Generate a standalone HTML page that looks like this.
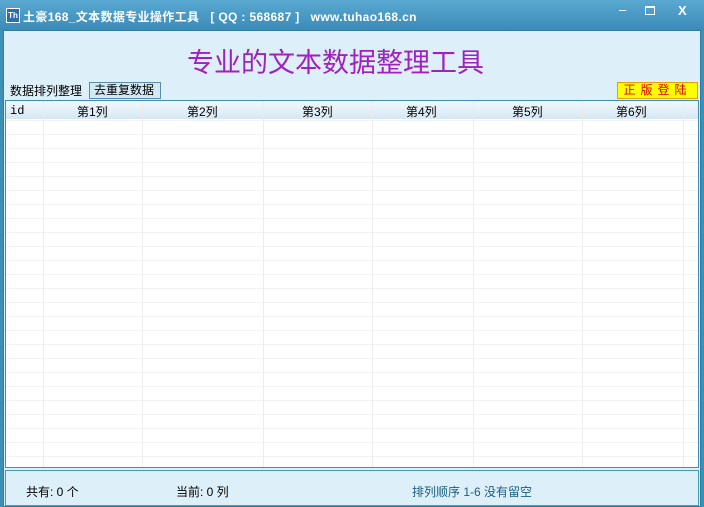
<!DOCTYPE html><html><head><meta charset="utf-8"><style>
body{margin:0;width:704px;height:507px;overflow:hidden;background:#3d8fb5;font-family:"Liberation Sans","Noto Sans CJK SC",sans-serif;position:relative}
div{position:absolute;box-sizing:border-box}
.t{font-size:12px;color:#000;white-space:nowrap}
</style></head><body>
<div style="left:0;top:0;width:704px;height:30px;background:linear-gradient(#5aa9d2,#3c8ab8)"></div>
<div style="left:6px;top:8px;width:14px;height:15px;background:#2a6fb0;border:1px solid #fff;color:#fff;font-size:8px;font-weight:bold;line-height:13px;text-align:center">Th</div>
<div class="t" style="left:23px;top:8px;color:#fff;font-weight:bold;font-size:12px;letter-spacing:0.35px">土豪168_文本数据专业操作工具 &nbsp;&nbsp;[ QQ : 568687 ] &nbsp;&nbsp;www.tuhao168.cn</div>
<div class="t" style="left:619px;top:2px;color:#fff;font-size:13px">–</div>
<div style="left:645px;top:6px;width:10px;height:9px;border:1px solid #fff;border-top-width:2px"></div>
<div class="t" style="left:678px;top:3px;color:#fff;font-size:13px;font-weight:bold">X</div>
<div style="left:3px;top:30px;width:698px;height:477px;background:#ddeff8;border:1px solid #2c7fa3"></div>
<div class="t" style="left:187px;top:41px;font-size:27px;color:#a020c0">专业的文本数据整理工具</div>
<div class="t" style="left:6px;top:82px;width:83px;height:18px;background:#ddeff8;line-height:18px;padding-left:4px">数据排列整理</div>
<div class="t" style="left:89px;top:82px;width:72px;height:17px;border:1px solid #5a8ea8;line-height:15px;padding-left:4px;background:#d3eaf5">去重复数据</div>
<div class="t" style="left:617px;top:82px;width:81px;height:17px;background:#ffff00;border:1px solid #e6a000;color:#e00000;line-height:15px;text-align:center;letter-spacing:5px">正版登陆</div>
<div style="left:5px;top:100px;width:694px;height:368px;border:1px solid #3d8fb5;background:#fff;background-image:repeating-linear-gradient(#fff 0 13px,#f2f2f2 13px 14px);background-position:0 6px"></div>
<div style="left:6px;top:101px;width:692px;height:18px;background:linear-gradient(#f2f8fc,#d6e8f4)"></div>
<div style="left:43px;top:101px;width:100px;height:366px;border-left:1px solid #ececec;border-right:1px solid #ececec"></div>
<div style="left:263px;top:101px;width:110px;height:366px;border-left:1px solid #ececec;border-right:1px solid #ececec"></div>
<div style="left:473px;top:101px;width:110px;height:366px;border-left:1px solid #ececec;border-right:1px solid #ececec"></div>
<div style="left:683px;top:101px;width:1px;height:366px;background:#ececec"></div>
<div class="t" style="left:10px;top:104px;font-family:'Liberation Mono',monospace">id</div>
<div class="t" style="left:77px;top:103px">第1列</div>
<div class="t" style="left:187px;top:103px">第2列</div>
<div class="t" style="left:302px;top:103px">第3列</div>
<div class="t" style="left:406px;top:103px">第4列</div>
<div class="t" style="left:512px;top:103px">第5列</div>
<div class="t" style="left:616px;top:103px">第6列</div>
<div style="left:5px;top:470px;width:694px;height:36px;border:1px solid #3d9fb5;background:#ddeff8"></div>
<div class="t" style="left:26px;top:483px">共有: 0 个</div>
<div class="t" style="left:176px;top:483px">当前: 0 列</div>
<div class="t" style="left:412px;top:483px;color:#1a5e80">排列顺序 1-6 没有留空</div>
</body></html>
